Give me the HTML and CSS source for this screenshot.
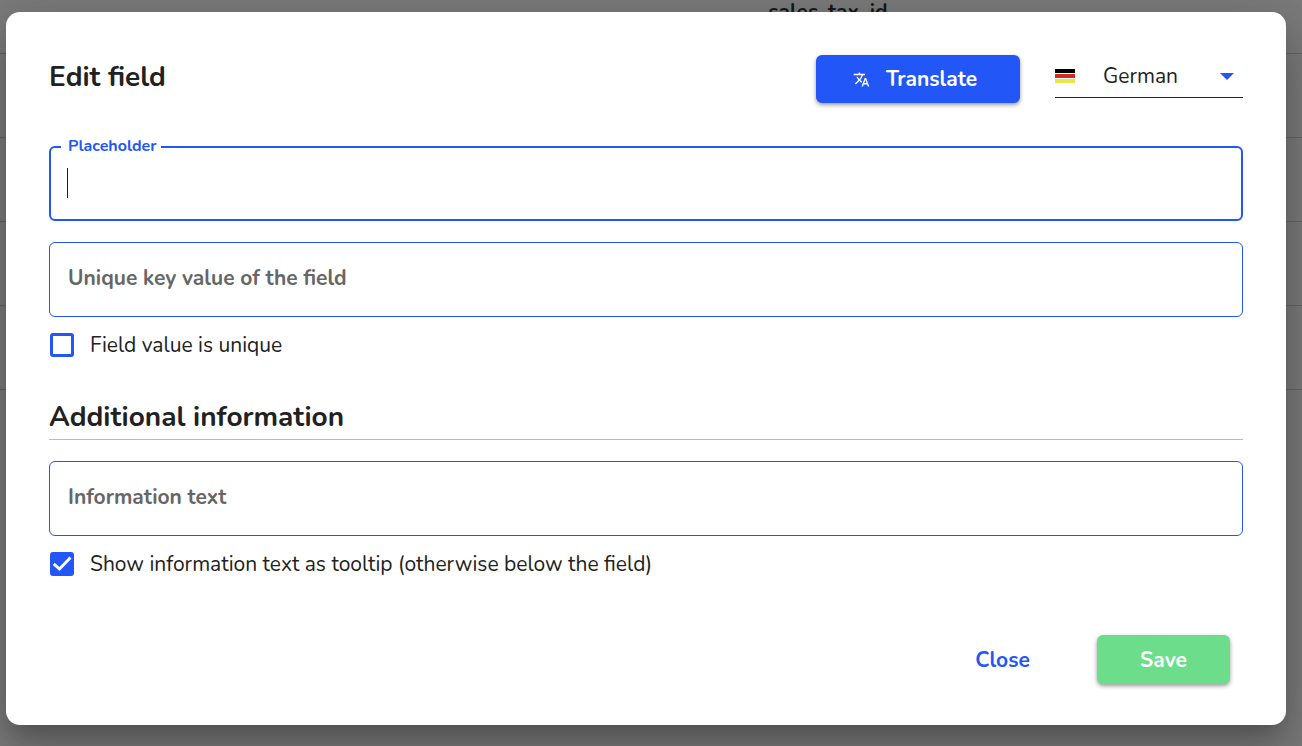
FILE: index.html
```html
<!DOCTYPE html>
<html lang="en">
<head>
<meta charset="utf-8">
<meta name="viewport" content="width=device-width, initial-scale=1">
<title>Edit field</title>
<link rel="stylesheet" href="styles.css">
</head>
<body>
<div class="backdrop" aria-hidden="true">
  <div class="row row-first"><span class="row-key">sales_tax_id</span></div>
  <div class="row"></div>
  <div class="row"></div>
  <div class="row"></div>
  <div class="row"></div>
</div>
<main class="overlay">
  <form class="dialog" role="dialog" aria-labelledby="title">
    <header class="header">
      <h1 class="title" id="title">Edit field</h1>
      <button class="button button-primary" type="button">
        <svg class="translate-icon" viewBox="0 0 24 24" aria-hidden="true"><path d="M12.87 15.07l-2.54-2.51.03-.03A17.52 17.52 0 0 0 14.07 6H17V4h-7V2H8v2H1v2h11.17C11.5 7.92 10.44 9.75 9 11.35 8.07 10.32 7.3 9.19 6.69 8h-2c.73 1.63 1.73 3.17 2.98 4.56l-5.09 5.02L4 19l5-5 3.11 3.11.76-2.04zM18.5 10h-2L12 22h2l1.12-3h4.75L21 22h2l-4.5-12zm-2.62 7l1.62-4.33L19.12 17h-3.24z"/></svg>
        <span>Translate</span>
      </button>
      <div class="language">
        <svg class="flag" viewBox="0 0 20 14" aria-hidden="true"><path fill="#000" d="M0 0h20v4H0z"/><path fill="#d02c1d" d="M0 5h20v4H0z"/><path fill="#e9e64a" d="M0 10h20v4H0z"/></svg>
        <select class="language-select" aria-label="Language"><option>German</option></select>
        <svg class="arrow" viewBox="0 0 14 7" aria-hidden="true"><path d="M0 0h14L7 7z"/></svg>
      </div>
    </header>
    <fieldset class="outlined">
      <legend class="legend"><label for="placeholder">Placeholder</label></legend>
      <div class="entry">
        <span class="caret"></span>
        <input class="entry-input" id="placeholder" type="text">
      </div>
    </fieldset>
    <input class="field" type="text" placeholder="Unique key value of the field" aria-label="Unique key value of the field">
    <label class="check"><input class="box" type="checkbox"><span>Field value is unique</span></label>
    <h2 class="section">Additional information</h2>
    <input class="field" type="text" placeholder="Information text" aria-label="Information text">
    <label class="check">
      <span class="box-wrap">
        <input class="box" type="checkbox" checked>
        <svg class="tick" viewBox="0 0 24 24" aria-hidden="true"><path d="M3.700 11.800L9.500 17L20.500 5.500"/></svg>
      </span>
      <span>Show information text as tooltip (otherwise below the field)</span>
    </label>
    <footer class="actions">
      <button class="button button-text" type="button">Close</button>
      <button class="button button-save" type="submit">Save</button>
    </footer>
  </form>
</main>
</body>
</html>
```
FILE: styles.css
```css
* { box-sizing: border-box; }
body {
  margin: 0;
  min-height: 100vh;
  overflow: hidden;
  background: #7b7b7b;
  color: #212121;
  font: 21px/30px Nunito, Lato, sans-serif;
}
.backdrop { position: absolute; inset: 0; overflow: hidden; }
.row { height: 84px; border-bottom: 1px solid #656565; }
.row-first { height: 54px; padding-left: 59%; }
.row-key { display: block; line-height: 24px; font-weight: 700; color: #19191b; }
.overlay { position: relative; padding: 12px 16px 21px 6px; }
.dialog {
  padding: 43px;
  padding-bottom: 41px;
  background: #fff;
  border-radius: 14px;
  box-shadow: 0 14px 19px -9px rgba(0,0,0,.2), 0 30px 48px 4px rgba(0,0,0,.14), 0 12px 58px 10px rgba(0,0,0,.12);
}
.header { display: flex; align-items: flex-start; }
.title { flex: 1; margin: 4px 0 0; font-size: 28px; line-height: 36px; font-weight: 700; }
.button {
  height: 48px;
  border: 0;
  border-radius: 6px;
  padding: 0;
  font: inherit;
  font-weight: 700;
  cursor: pointer;
}
.button-primary {
  display: flex;
  align-items: center;
  justify-content: center;
  gap: 16px;
  width: 204px;
  margin-right: 35px;
  padding-right: 6px;
  background: #2356f6;
  color: #fff;
  box-shadow: 0 2px 4px rgba(0,0,0,.4);
}
.translate-icon { width: 17px; height: 17px; fill: #fff; }
.language { display: flex; align-items: center; width: 188px; height: 43px; border-bottom: 1px solid #212121; }
.flag { width: 20px; height: 14px; }
.language-select {
  appearance: none;
  flex: 1;
  min-width: 0;
  margin-left: 28px;
  padding: 0;
  border: 0;
  background: none;
  color: inherit;
  font: inherit;
}
.arrow { width: 14px; height: 7px; margin-right: 9px; fill: #2356f6; }
.outlined {
  min-width: 0;
  margin: 33px 0 0;
  padding: 0 16px 0 10px;
  border: 2px solid #2356f6;
  border-radius: 6px;
}
.legend { padding: 0 4px 2px 7px; color: #2356f6; font-size: 16px; line-height: 20px; font-weight: 700; }
.entry { display: flex; padding: 10px 0 21px 6px; }
.caret { width: 1px; height: 30px; background: #212121; }
.entry-input { flex: 1; min-width: 0; height: 30px; padding: 0; border: 0; outline: 0; background: none; font: inherit; caret-color: transparent; }
.field {
  display: block;
  width: 100%;
  height: 75px;
  margin-top: 21px;
  padding: 0 18px 3px;
  border: 1px solid #2356f6;
  border-radius: 6px;
  background: #fff;
  color: inherit;
  font: inherit;
}
.field::placeholder { color: #666; font-weight: 700; opacity: 1; }
.check { display: flex; align-items: center; gap: 16px; width: fit-content; margin: 13px 0 0 1px; }
.box { appearance: none; display: block; width: 24px; height: 24px; margin: 0; border: 3px solid #2356f6; border-radius: 3px; background: #fff; }
.box:checked { background: #2356f6; }
.box-wrap { position: relative; }
.tick { position: absolute; inset: 0; fill: none; stroke: #fff; stroke-width: 3; pointer-events: none; }
.section { margin: 39px 0 0; padding-bottom: 4px; border-bottom: 1px solid #b8bcc0; font-size: 28px; line-height: 36px; font-weight: 700; }
.actions { display: flex; justify-content: flex-end; gap: 32px; margin-top: 56px; padding-right: 13px; }
.actions .button { height: 49px; }
.button-text { width: 125px; background: none; color: #2356f6; }
.button-save { width: 133px; background: #6cdd8b; color: #fff; box-shadow: 0 2px 4px rgba(0,0,0,.4); }
```
